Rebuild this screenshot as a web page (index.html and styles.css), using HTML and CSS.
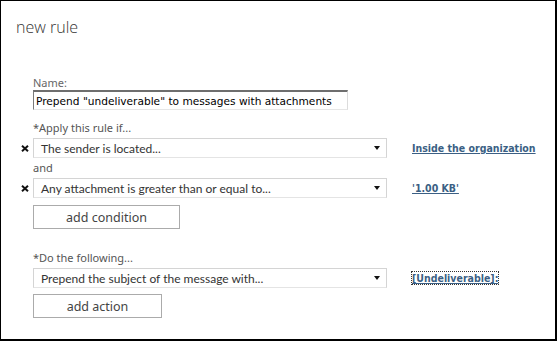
FILE: index.html
```html
<!DOCTYPE html>
<html lang="en">
<head>
  <meta charset="UTF-8">
  <title>new rule</title>
  <link rel="stylesheet" href="styles.css">
</head>
<body>
  <div class="dialog">
    <h1 class="dialog-title">new rule</h1>

    <form class="rule-form">
      <label class="field-label name-label" for="ruleName">Name:</label>
      <input class="name-input" id="ruleName" type="text" value="Prepend &quot;undeliverable&quot; to messages with attachments">

      <div class="field-label section-label">*Apply this rule if...</div>

      <div class="rule-row">
        <span class="remove-btn" title="remove">
          <svg width="8" height="7" viewBox="0 0 8 7"><path d="M1 0.8 L7 6.2 M7 0.8 L1 6.2" stroke="#111" stroke-width="2"/></svg>
        </span>
        <div class="select-box">
          <span>The sender is located...</span>
          <span class="select-arrow"></span>
        </div>
        <a class="rule-link" href="#">Inside the organization</a>
      </div>

      <div class="field-label and-label">and</div>

      <div class="rule-row">
        <span class="remove-btn" title="remove">
          <svg width="8" height="7" viewBox="0 0 8 7"><path d="M1 0.8 L7 6.2 M7 0.8 L1 6.2" stroke="#111" stroke-width="2"/></svg>
        </span>
        <div class="select-box">
          <span>Any attachment is greater than or equal to...</span>
          <span class="select-arrow"></span>
        </div>
        <a class="rule-link" href="#">'1.00 KB'</a>
      </div>

      <button type="button" class="add-btn add-condition">add condition</button>

      <div class="field-label section-label do-label">*Do the following...</div>

      <div class="rule-row plain">
        <div class="select-box">
          <span>Prepend the subject of the message with...</span>
          <span class="select-arrow"></span>
        </div>
        <a class="rule-link focused" href="#">[Undeliverable]:</a>
      </div>

      <button type="button" class="add-btn add-action">add action</button>
    </form>
  </div>
</body>
</html>
```

FILE: styles.css
```css
* {
  margin: 0;
  padding: 0;
  box-sizing: border-box;
}

body {
  font-family: "Noto Sans", sans-serif;
  background-color: #fff;
  color: #333;
}

.dialog {
  width: 557px;
  height: 341px;
  border-style: solid;
  border-color: #000;
  border-width: 1px 2px 2px 1px;
  background-color: #fff;
}

.dialog-title {
  font-family: "Open Sans", sans-serif;
  font-weight: 300;
  font-size: 16px;
  line-height: 22px;
  color: #333;
  padding: 15px 0 0 15px;
}

.rule-form {
  padding: 37px 0 0 32px;
}

.field-label {
  display: block;
  font-size: 11px;
  line-height: 15px;
  color: #555;
}

.name-label {
  color: #666;
}

.name-input {
  display: block;
  width: 315px;
  height: 20px;
  padding: 0 2px;
  border-style: solid;
  border-width: 2px 1px 1px 1px;
  border-color: #6e6e6e #dcdcdc #e6e6e6 #7a7a7a;
  font-family: "DejaVu Sans", sans-serif;
  font-size: 10.6px;
  color: #000;
  outline: none;
}

.section-label {
  margin-top: 10px;
}

.and-label {
  margin-top: 2px;
}

.do-label {
  margin-top: 21px;
}

.rule-row {
  display: flex;
  align-items: center;
  margin-left: -15px;
  margin-top: 3px;
}

.rule-row.plain {
  margin-left: 0;
}

.remove-btn {
  width: 15px;
  display: flex;
  padding-left: 3px;
  cursor: pointer;
}

.select-box {
  width: 354px;
  height: 20px;
  border: 1px solid #d4d4d4;
  border-bottom-color: #e4e4e4;
  display: flex;
  align-items: center;
  justify-content: space-between;
  padding: 0 6px 0 7px;
  font-family: "Lato", sans-serif;
  font-size: 12px;
  color: #333;
}

.select-arrow {
  width: 0;
  height: 0;
  border-left: 3.5px solid transparent;
  border-right: 3.5px solid transparent;
  border-top: 4px solid #111;
}

.rule-link {
  margin-left: 25px;
  font-family: "DejaVu Sans Condensed", "DejaVu Sans", sans-serif;
  font-weight: bold;
  font-size: 10.5px;
  color: #3b5f84;
  text-decoration: underline;
}

.rule-link.focused {
  outline: 1px dotted #333;
}

.add-btn {
  display: block;
  height: 24px;
  margin-top: 7px;
  background-color: #fff;
  border: 1px solid #ababab;
  font-family: "Noto Sans", sans-serif;
  font-size: 12.5px;
  color: #444;
  cursor: pointer;
}

.add-condition {
  width: 147px;
}

.add-action {
  width: 129px;
  margin-top: 6px;
}
```
